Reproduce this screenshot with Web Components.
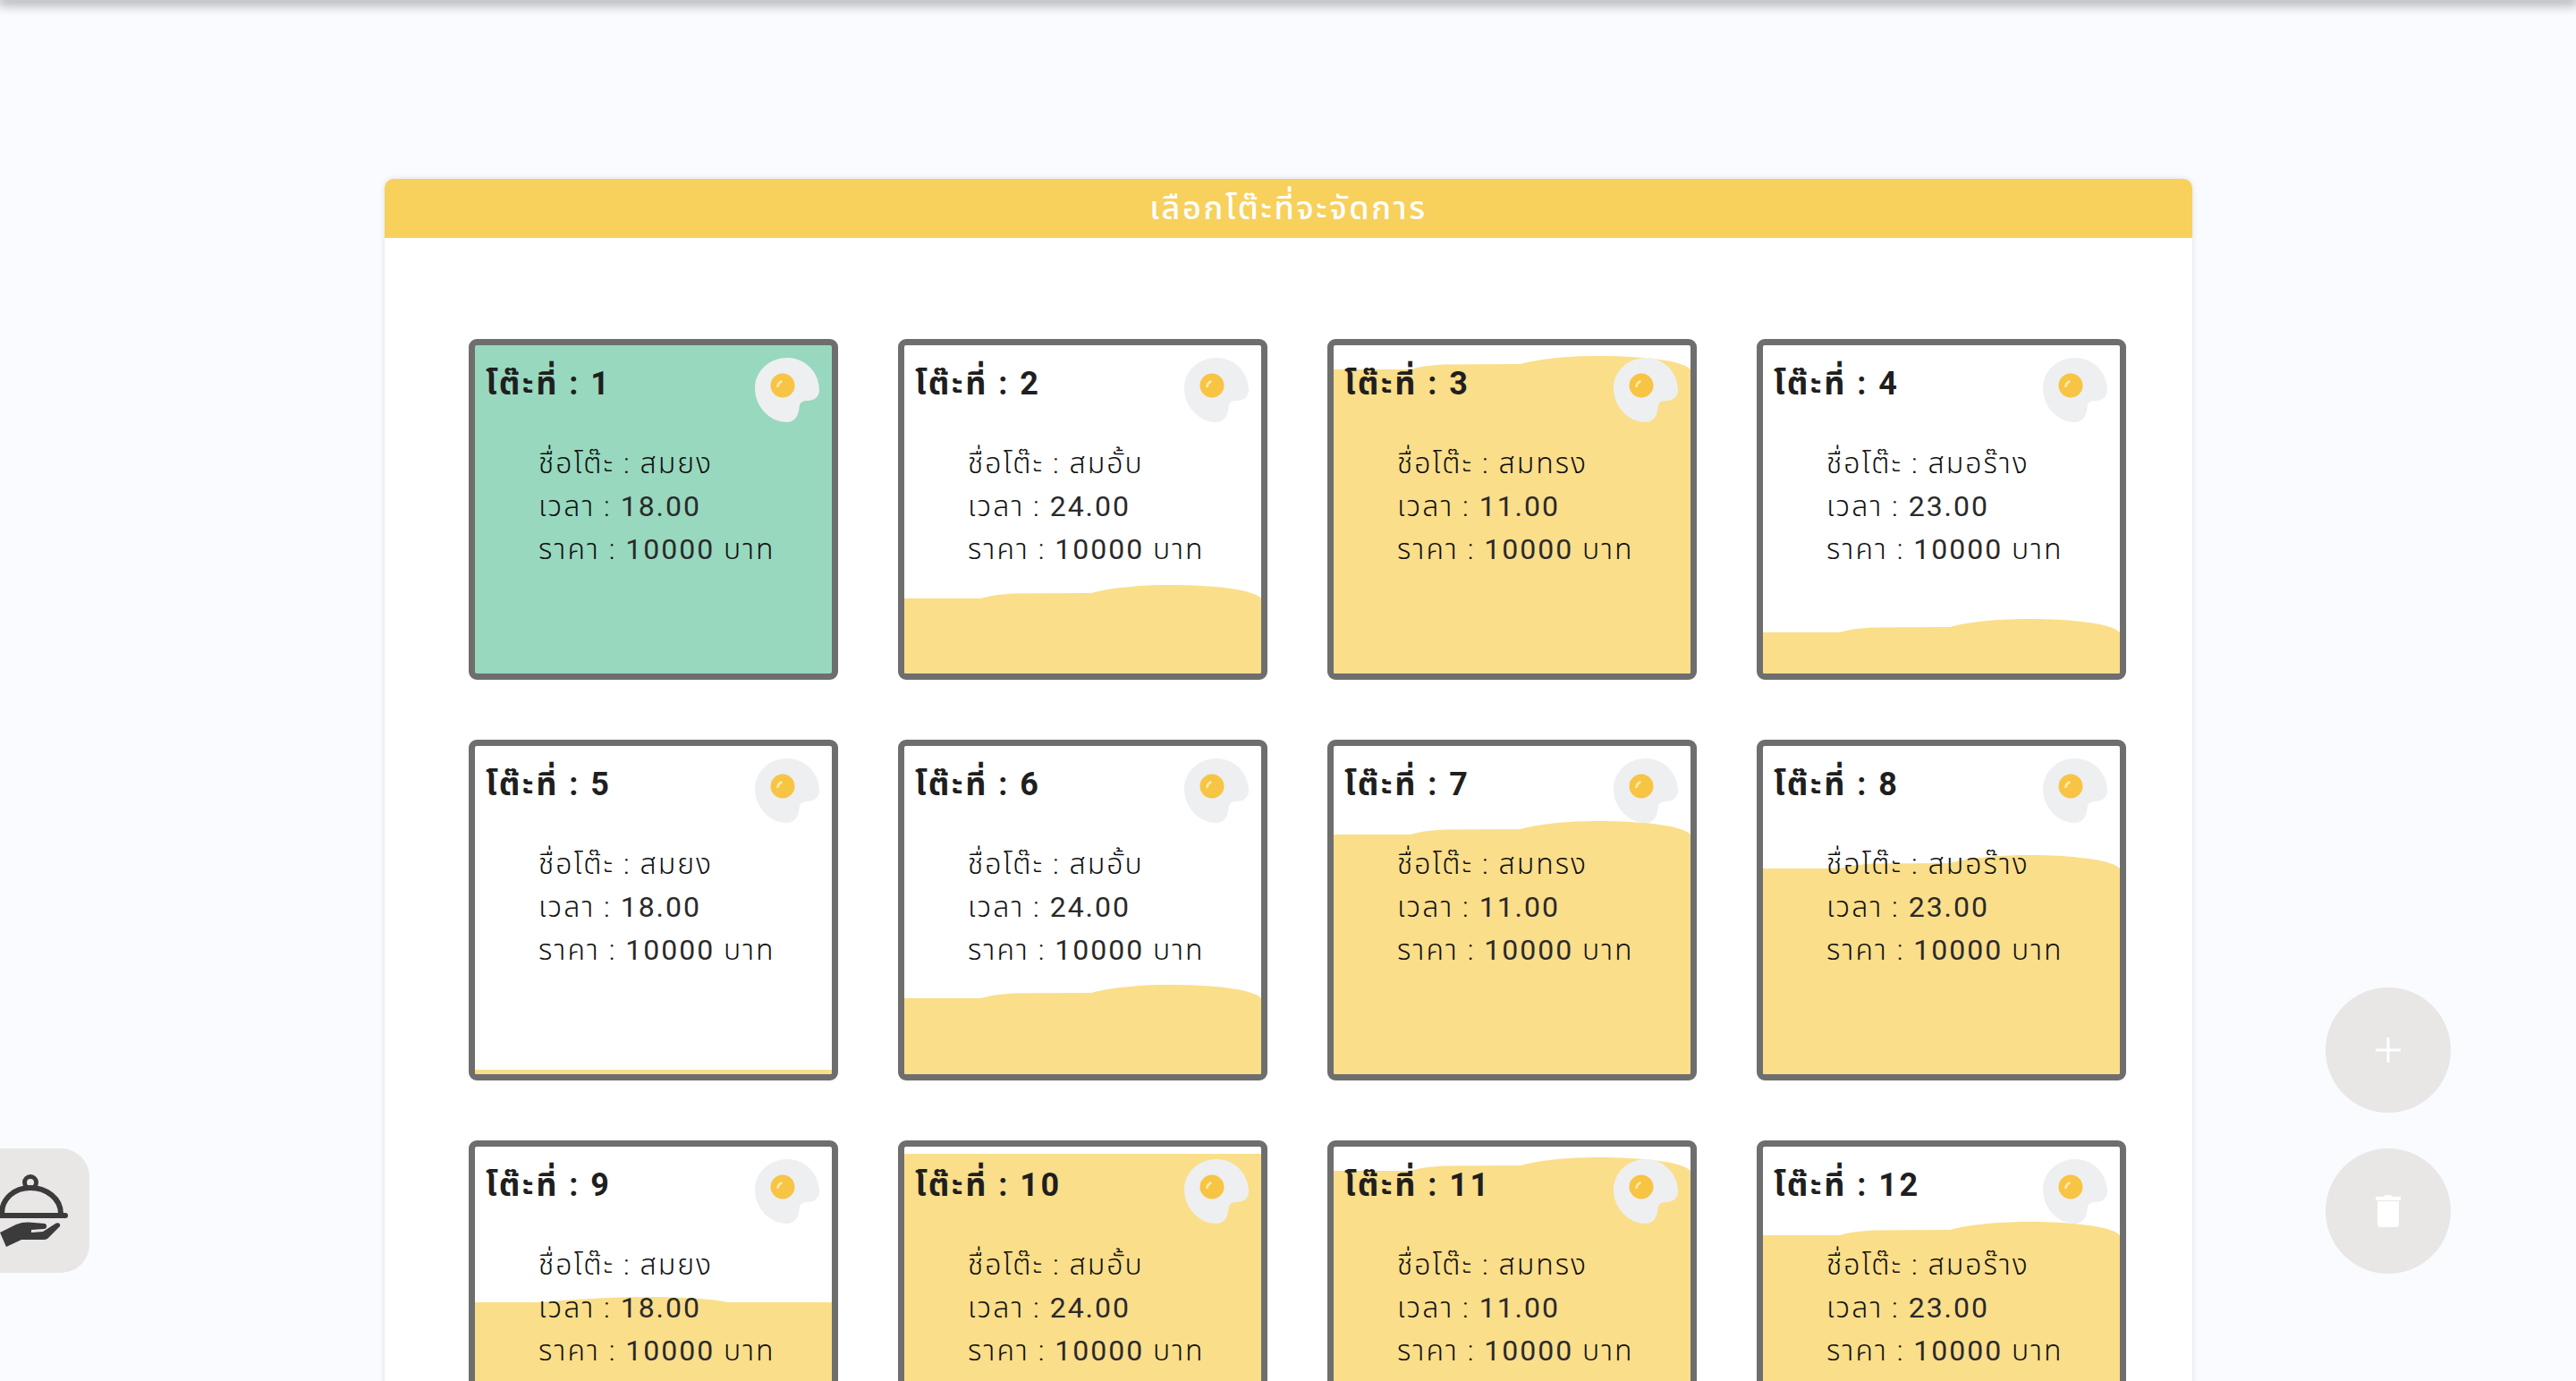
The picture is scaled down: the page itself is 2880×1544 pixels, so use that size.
<!DOCTYPE html>
<html lang="th">
<head>
<meta charset="utf-8">
<title>เลือกโต๊ะที่จะจัดการ</title>
<style>
  html, body { margin: 0; height: 100%; overflow: hidden; }
  body { background: #f9fbff; font-family: Roboto, "Noto Sans Thai", "Noto Sans", sans-serif; }
</style>
</head>
<body>
<app-topbar></app-topbar>
<table-panel heading="เลือกโต๊ะที่จะจัดการ">
  <table-card no="1" name="สมยง" time="18.00" price="10000" active></table-card>
  <table-card no="2" name="สมอั้บ" time="24.00" price="10000" top="268"></table-card>
  <table-card no="3" name="สมทรง" time="11.00" price="10000" top="12"></table-card>
  <table-card no="4" name="สมอร๊าง" time="23.00" price="10000" top="306"></table-card>
  <table-card no="5" name="สมยง" time="18.00" price="10000" top="362" shape="flat"></table-card>
  <table-card no="6" name="สมอั้บ" time="24.00" price="10000" top="267"></table-card>
  <table-card no="7" name="สมทรง" time="11.00" price="10000" top="84"></table-card>
  <table-card no="8" name="สมอร๊าง" time="23.00" price="10000" top="122"></table-card>
  <table-card no="9" name="สมยง" time="18.00" price="10000" top="168" shape="hump"></table-card>
  <table-card no="10" name="สมอั้บ" time="24.00" price="10000" top="8" shape="flat"></table-card>
  <table-card no="11" name="สมทรง" time="11.00" price="10000" top="12"></table-card>
  <table-card no="12" name="สมอร๊าง" time="23.00" price="10000" top="84"></table-card>
</table-panel>
<side-tab></side-tab>
<round-btn kind="add" style="top:1104px"></round-btn>
<round-btn kind="trash" style="top:1284px"></round-btn>

<script>
  // water level shapes, drawn from the top of the fill
  const FILL_SHAPES = {
    wave: "M0 15H86C96 12 110 10 125 9.500L210 9C226 4 260 0 297 0C345 0 392 5 400 15V400H0Z",
    hump: "M0 6H72C110 3 150 0 194 0C230 0 265 2 283 6H400V400H0Z",
    flat: "M0 0H400V400H0Z"
  };

  class AppTopbar extends HTMLElement {
    connectedCallback() {
      const root = this.attachShadow({ mode: "open" });
      root.innerHTML = `<style>
        :host { display: block; height: 0; box-shadow: 0 0 14px 3px rgba(0, 0, 0, .6); }
      </style>`;
    }
  }

  class TablePanel extends HTMLElement {
    connectedCallback() {
      const root = this.attachShadow({ mode: "open" });
      root.innerHTML = `<style>
        :host {
          display: block;
          width: 2021px;
          margin: 200px 0 0 430px;
          background: #fff;
          border-radius: 10px 10px 0 0;
          box-shadow: 0 0 6px rgba(0, 0, 0, .12);
        }
        h1 {
          margin: 0;
          height: 66px;
          line-height: 66px;
          text-align: center;
          background: #f7d15b;
          color: #fff;
          font-size: 36px;
          font-weight: 500;
          letter-spacing: 2.6px;
          border-radius: 10px 10px 0 0;
        }
        .grid {
          display: grid;
          grid-template-columns: repeat(4, 413px);
          column-gap: 67px;
          row-gap: 67px;
          padding: 113px 74px 0 94px;
        }
      </style>
      <h1></h1>
      <div class="grid"><slot></slot></div>`;
      root.querySelector("h1").textContent = this.getAttribute("heading");
    }
  }

  class TableCard extends HTMLElement {
    connectedCallback() {
      const root = this.attachShadow({ mode: "open" });
      const top = this.getAttribute("top");
      const shape = FILL_SHAPES[this.getAttribute("shape") || "wave"];
      root.innerHTML = `<style>
        :host {
          display: block;
          position: relative;
          box-sizing: border-box;
          height: 381px;
          border: 7px solid #6e6e6e;
          border-radius: 9px;
          overflow: hidden;
          background: #fff;
          color: #1f1f1f;
        }
        :host([active]) { background: #98d8bf; }
        .fill { position: absolute; left: 0; width: 100%; height: 400px; fill: #fade8a; }
        .egg { position: absolute; right: 14px; top: 14px; width: 72px; height: 72px; }
        .body { position: relative; padding: 16px 12px; }
        h2 { margin: 0; font-size: 36px; line-height: 54px; font-weight: 700; letter-spacing: 2.5px; }
        ul { margin: 38px 0 0 59px; padding: 0; list-style: none; font-size: 32px; line-height: 48px; letter-spacing: 2px; font-weight: 300; color: #111; }
        b { font-weight: 400; color: #2a2a2a; }
      </style>
      ${top === null ? "" : `<svg class="fill" style="top:${top}px" viewBox="0 0 400 400" preserveAspectRatio="none"><path d="${shape}"/></svg>`}
      <svg class="egg" viewBox="0 0 72 72">
        <path fill="#eeeff1" d="M36 0C57 0 72 17 72 36C72 44 66 48 59 48C53 48 50 50 49.500 56C49 65 44 72 36 72C16 72 0 54 0 34C0 15 16 0 36 0Z"/>
        <circle cx="31" cy="31" r="13.500" fill="#f7c444"/>
        <path d="M25.500 32C26 29 27.500 27.500 29.500 26.500" fill="none" stroke="#fdeaa8" stroke-width="2.600" stroke-linecap="round"/>
      </svg>
      <div class="body">
        <h2>โต๊ะที่ : <span id="no"></span></h2>
        <ul>
          <li>ชื่อโต๊ะ : <span id="name"></span></li>
          <li>เวลา : <b id="time"></b></li>
          <li>ราคา : <b id="price"></b> บาท</li>
        </ul>
      </div>`;
      for (const k of ["no", "name", "time", "price"]) {
        root.getElementById(k).textContent = this.getAttribute(k);
      }
    }
  }

  class SideTab extends HTMLElement {
    connectedCallback() {
      const root = this.attachShadow({ mode: "open" });
      root.innerHTML = `<style>
        :host {
          position: fixed;
          left: 0;
          top: 1284px;
          width: 100px;
          height: 139px;
          background: #e9e6e6;
          border-radius: 0 32px 32px 0;
          overflow: hidden;
        }
        svg { position: absolute; left: -8px; top: 28px; width: 84px; height: 83px; }
      </style>
      <svg viewBox="0 0 84 83" fill="#3b3b3b">
        <circle cx="42" cy="10" r="6.500" fill="none" stroke="#3b3b3b" stroke-width="5"/>
        <path d="M10 45C10 28 24 16 42 16C60 16 76 28 76 45" fill="none" stroke="#3b3b3b" stroke-width="6"/>
        <path d="M0 44H81C83 44 84 45 84 47C84 49 83 50 81 50H0Z"/>
        <path d="M8 66L26 57C33 54 40 54 46 55L58 56C61 56.500 61 62 57 62L43 63V66L56 65L70 56C73 54 76 56 75 59L62 72C60 74 58 74 55 74H32L15 82Z"/>
      </svg>`;
    }
  }

  class RoundBtn extends HTMLElement {
    connectedCallback() {
      const root = this.attachShadow({ mode: "open" });
      const icon = this.getAttribute("kind") === "add"
        ? `<path d="M12.500 4H15.500V16.500H28V19.500H15.500V32H12.500V19.500H0V16.500H12.500Z"/>`
        : `<path d="M0 2H9C10 .5 11 0 14 0C17 0 18 .5 19 2H28V6H0ZM2 7H26V32C26 34 25 36 23 36H5C3 36 2 34 2 32Z"/>`;
      root.innerHTML = `<style>
        :host {
          position: fixed;
          left: 2600px;
          width: 140px;
          height: 140px;
          border-radius: 50%;
          background: #e9e6e6;
          display: flex;
          align-items: center;
          justify-content: center;
        }
        svg { width: 28px; height: 36px; fill: #fff; }
      </style>
      <svg viewBox="0 0 28 36">${icon}</svg>`;
    }
  }

  customElements.define("app-topbar", AppTopbar);
  customElements.define("table-panel", TablePanel);
  customElements.define("table-card", TableCard);
  customElements.define("side-tab", SideTab);
  customElements.define("round-btn", RoundBtn);
</script>
</body>
</html>
